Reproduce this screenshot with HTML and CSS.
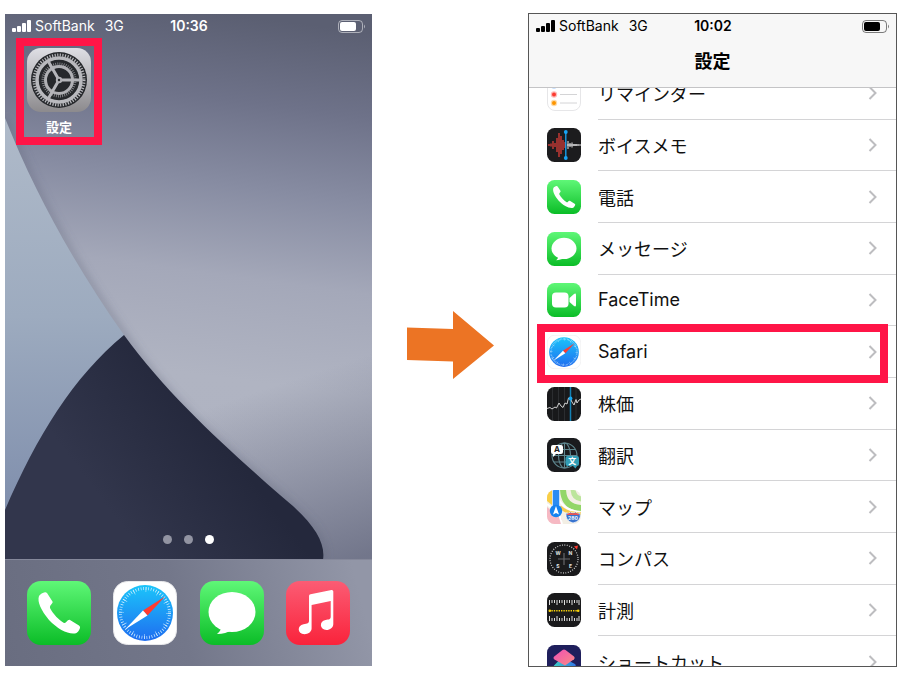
FILE: index.html
```html
<!DOCTYPE html>
<html lang="ja">
<head>
<meta charset="utf-8">
<meta name="viewport" content="width=device-width, initial-scale=1">
<title>設定 - Safari</title>
<link rel="stylesheet" href="styles.css">
</head>
<body>
<svg class="defs" aria-hidden="true">
  <defs>
    <linearGradient id="green" x1="0" y1="0" x2="0" y2="1"><stop offset="0" stop-color="#5ff777"/><stop offset="1" stop-color="#0bbd27"/></linearGradient>
    <linearGradient id="blue" x1="0" y1="0" x2="0" y2="1"><stop offset="0" stop-color="#1bc5fa"/><stop offset="1" stop-color="#1f6df0"/></linearGradient>
    <linearGradient id="red" x1="0" y1="0" x2="0" y2="1"><stop offset="0" stop-color="#fb5c74"/><stop offset="1" stop-color="#fa233b"/></linearGradient>
    <linearGradient id="metal" x1="0" y1="0" x2="0" y2="1"><stop offset="0" stop-color="#dfdfe5"/><stop offset="1" stop-color="#8c8a8d"/></linearGradient>
  </defs>
  <symbol id="phone" viewBox="0 0 64 64">
    <rect width="64" height="64" rx="14" fill="url(#green)"/>
    <path fill="#fff" d="M12 15C13 13 16 11.500 18 11.200Q19 11 20 12L25.500 20.500C26.500 22.500 22.500 23.500 23 27C26 33 32 39 37 42C39.500 42.500 40.500 38 43 39L52 44.500Q53.500 45.500 53 47C52 50 50.500 51.500 49 52.200C42 54 31 48.500 22 39C14 29 10 21 12 15Z"/>
  </symbol>
  <symbol id="messages" viewBox="0 0 64 64">
    <rect width="64" height="64" rx="14" fill="url(#green)"/>
    <ellipse cx="32" cy="31" rx="23.500" ry="20" fill="#fff"/>
    <path fill="#fff" d="M20 45C22.500 48 19 51.500 17 53C23 53 28 51.500 31 49Z"/>
  </symbol>
  <symbol id="safari" viewBox="0 0 64 64">
    <rect x=".5" y=".5" width="63" height="63" rx="14" fill="#fff" stroke="#e8e8ea"/>
    <circle cx="32" cy="32" r="28" fill="url(#blue)"/>
    <circle cx="32" cy="32" r="24.500" fill="none" stroke="#d7f0ff" stroke-width="3" stroke-dasharray=".7 1.866"/>
    <circle cx="32" cy="32" r="23.500" fill="none" stroke="#d7f0ff" stroke-width="5" stroke-dasharray=".7 11.604" stroke-opacity=".8"/>
    <path fill="#ff3b30" d="M52 15.500L30 29.500L34.500 34.500Z"/>
    <path fill="#fff" d="M12 48.500L30 29.500L34.500 34.500Z"/>
  </symbol>
</svg>

<main class="steps">
  <section class="home" aria-label="ホーム画面">
    <svg class="wallpaper" viewBox="0 0 367 652" preserveAspectRatio="none" aria-hidden="true">
      <defs>
        <linearGradient id="sky" gradientUnits="userSpaceOnUse" x1="225" y1="0" x2="150" y2="560">
          <stop offset="0" stop-color="#5b5f72"/><stop offset=".15" stop-color="#6e7289"/><stop offset=".3" stop-color="#878ca2"/><stop offset=".46" stop-color="#a4a8b9"/><stop offset=".64" stop-color="#b0b4c2"/><stop offset="1" stop-color="#aeb2c1"/>
        </linearGradient>
        <linearGradient id="corner" gradientUnits="userSpaceOnUse" x1="275" y1="370" x2="335" y2="550">
          <stop offset="0" stop-color="#6f7388" stop-opacity="0"/><stop offset="1" stop-color="#6f7388" stop-opacity=".95"/>
        </linearGradient>
        <linearGradient id="pale" x1="0" y1="0" x2="0" y2="1">
          <stop offset="0" stop-color="#afbac9"/><stop offset=".5" stop-color="#9dabbf"/><stop offset="1" stop-color="#7f8eac"/>
        </linearGradient>
        <linearGradient id="navy" gradientUnits="userSpaceOnUse" x1="85" y1="470" x2="190" y2="390">
          <stop offset="0" stop-color="#32364c"/><stop offset="1" stop-color="#24283c"/>
        </linearGradient>
        <linearGradient id="dock" gradientUnits="userSpaceOnUse" x1="0" y1="650" x2="350" y2="560">
          <stop offset="0" stop-color="#696d80"/><stop offset=".5" stop-color="#73778a"/><stop offset="1" stop-color="#9296a7"/>
        </linearGradient>
        <filter id="soft" x="-20%" y="-20%" width="140%" height="140%"><feGaussianBlur stdDeviation="4"/></filter>
      </defs>
      <rect width="367" height="652" fill="url(#sky)"/>
      <rect width="367" height="652" fill="url(#corner)"/>
      <path filter="url(#soft)" fill="none" stroke="#5d6178" stroke-opacity=".5" stroke-width="5" d="M0 104C30 180 72 255 119 321C165 390 220 434 272 479C310 512 320 527 318 546"/>
      <path fill="url(#pale)" d="M0 104C30 180 72 255 119 321L119 500L0 500Z"/>
      <path fill="url(#navy)" d="M0 496C32 422 68 363 119 321C165 384 222 434 275 481C307 507 321 527 318 546L318 548L0 548Z"/>
      <rect y="546" width="367" height="106" fill="url(#dock)"/>
    </svg>

    <header class="status status-light">
      <span class="carrier">
        <svg class="signal" viewBox="0 0 19 12" aria-hidden="true"><rect y="8" width="4" height="4" rx="1"/><rect x="5" y="6" width="4" height="6" rx="1"/><rect x="10" y="3" width="4" height="9" rx="1"/><rect x="15" width="4" height="12" rx="1"/></svg>
        <span>SoftBank</span><span class="network">3G</span>
      </span>
      <time class="time">10:36</time>
      <svg class="battery" viewBox="0 0 28 13" aria-hidden="true"><rect x=".5" y=".5" width="24" height="12" rx="3.500" fill="none" stroke="currentColor" stroke-opacity=".5"/><rect x="2" y="2" width="16" height="9" rx="2"/><path d="M26 4.500Q28 6.500 26 8.500Z" opacity=".5"/></svg>
    </header>

    <div class="apps">
      <button class="app" type="button">
        <svg class="app-icon" viewBox="0 0 64 64" aria-hidden="true">
          <rect width="64" height="64" rx="14" fill="url(#metal)"/>
          <circle cx="32" cy="32" r="28" fill="#26282c"/>
          <circle cx="32" cy="32" r="25" fill="none" stroke="#b9b9be" stroke-width="3" stroke-dasharray="1.200 1.418"/>
          <circle cx="32" cy="32" r="22" fill="none" stroke="#b9b9be" stroke-width="3.500"/>
          <circle cx="32" cy="32" r="16" fill="none" stroke="#8e8f94" stroke-width="3" stroke-dasharray=".8 1.295"/>
          <circle cx="32" cy="32" r="13.500" fill="none" stroke="#b0b0b5" stroke-width="3"/>
          <path d="M32 32H53M32 32L21.500 13.800M32 32L21.500 50.200" stroke="#b5b5ba" stroke-width="3"/>
          <circle cx="32" cy="32" r="3.200" fill="#b0b0b5"/><circle cx="32" cy="32" r="1.200" fill="#26282c"/>
        </svg>
        <span class="app-label">設定</span>
      </button>
    </div>

    <div class="pages" aria-hidden="true"><i class="dot"></i><i class="dot"></i><i class="dot dot-on"></i></div>

    <nav class="dock" aria-label="Dock">
      <button class="dock-app" type="button" aria-label="電話"><svg class="app-icon"><use href="#phone"/></svg></button>
      <button class="dock-app" type="button" aria-label="Safari"><svg class="app-icon"><use href="#safari"/></svg></button>
      <button class="dock-app" type="button" aria-label="メッセージ"><svg class="app-icon"><use href="#messages"/></svg></button>
      <button class="dock-app" type="button" aria-label="ミュージック">
        <svg class="app-icon" viewBox="0 0 64 64"><rect width="64" height="64" rx="14" fill="url(#red)"/><path fill="#fff" d="M23 15Q23 13.500 24.500 13.200L45.500 9Q47.300 8.800 47.300 10.500V43C47.300 46.500 44 49 40.500 49C33.500 49 33 40 39.500 39C43 38.400 44.700 38.500 44.700 35.500V20L25.600 24V47.500C25.600 51 22 53.200 18.500 53.200C11 53 11 44.500 17.500 43.300C21.500 42.700 23 42.500 23 39.500Z"/></svg>
      </button>
    </nav>
  </section>

  <svg class="arrow" viewBox="0 0 87 68" aria-hidden="true"><path fill="#ec7424" d="M0 16.500L46 18V0L87 34.500L46 68V50.500L0 49Z"/></svg>

  <section class="settings" aria-label="設定">
    <header class="settings-head">
      <div class="status">
        <span class="carrier">
          <svg class="signal" viewBox="0 0 19 12" aria-hidden="true"><rect y="8" width="4" height="4" rx="1"/><rect x="5" y="6" width="4" height="6" rx="1"/><rect x="10" y="3" width="4" height="9" rx="1"/><rect x="15" width="4" height="12" rx="1"/></svg>
          <span>SoftBank</span><span class="network">3G</span>
        </span>
        <time class="time">10:02</time>
        <svg class="battery" viewBox="0 0 28 13" aria-hidden="true"><rect x=".5" y=".5" width="24" height="12" rx="3.500" fill="none" stroke="currentColor" stroke-opacity=".5"/><rect x="2" y="2" width="16" height="9" rx="2"/><path d="M26 4.500Q28 6.500 26 8.500Z" opacity=".5"/></svg>
      </div>
      <h1 class="title">設定</h1>
    </header>
    <div class="viewport">
      <ul class="list">
        <li><a class="row" href="#">
          <svg class="row-icon" viewBox="0 0 34 34"><rect x=".5" y=".5" width="33" height="33" rx="7.500" fill="#fff" stroke="#e6e6e8"/><g stroke="#d4d4d6"><path d="M13 8.500H30M13 17.500H30M13 26H30"/></g><g fill-opacity=".35"><circle cx="7" cy="8.500" r="3.200" fill="#1a82fb"/><circle cx="7" cy="17.500" r="3.200" fill="#fc3b30"/><circle cx="7" cy="26" r="3.200" fill="#fd9500"/></g><circle cx="7" cy="8.500" r="2" fill="#1a82fb"/><circle cx="7" cy="17.500" r="2" fill="#fc3b30"/><circle cx="7" cy="26" r="2" fill="#fd9500"/></svg>
          <span class="row-body"><span>リマインダー</span><svg class="chevron" viewBox="0 0 9 14"><path d="M1.500 1L7.500 7L1.500 13"/></svg></span></a></li>
        <li><a class="row" href="#">
          <svg class="row-icon" viewBox="0 0 34 34"><rect width="34" height="34" rx="7.500" fill="#1c1c1e"/><path stroke="#dc3e38" stroke-width="1.300" d="M2 16V18M4 15.500V18.500M6 13V21M8 15V19M10 10V24M12 5V29M14 8V26M16 12V22M18 14V20"/><path stroke="#e9e9ea" d="M21 13V21M23 15V19M25 14.500V19.500M27 16V18M29 16V18M31 16.500V17.500M20 17H34"/><path stroke="#17a5f5" stroke-width="1.300" d="M18.800 4V30"/><circle cx="18.800" cy="4" r="1.900" fill="#17a5f5"/><circle cx="18.800" cy="30" r="1.900" fill="#17a5f5"/></svg>
          <span class="row-body"><span>ボイスメモ</span><svg class="chevron" viewBox="0 0 9 14"><path d="M1.500 1L7.500 7L1.500 13"/></svg></span></a></li>
        <li><a class="row" href="#">
          <svg class="row-icon"><use href="#phone"/></svg>
          <span class="row-body"><span>電話</span><svg class="chevron" viewBox="0 0 9 14"><path d="M1.500 1L7.500 7L1.500 13"/></svg></span></a></li>
        <li><a class="row" href="#">
          <svg class="row-icon"><use href="#messages"/></svg>
          <span class="row-body"><span>メッセージ</span><svg class="chevron" viewBox="0 0 9 14"><path d="M1.500 1L7.500 7L1.500 13"/></svg></span></a></li>
        <li><a class="row" href="#">
          <svg class="row-icon" viewBox="0 0 34 34"><rect width="34" height="34" rx="7.500" fill="url(#green)"/><rect x="5" y="9.500" width="16.500" height="15" rx="4" fill="#fff"/><path fill="#fff" d="M22.500 15L27 11Q29 9.800 29 12V22Q29 24.200 27 23L22.500 19Z"/></svg>
          <span class="row-body"><span>FaceTime</span><svg class="chevron" viewBox="0 0 9 14"><path d="M1.500 1L7.500 7L1.500 13"/></svg></span></a></li>
        <li><a class="row row-marked" href="#">
          <svg class="row-icon"><use href="#safari"/></svg>
          <span class="row-body"><span>Safari</span><svg class="chevron" viewBox="0 0 9 14"><path d="M1.500 1L7.500 7L1.500 13"/></svg></span></a></li>
        <li><a class="row" href="#">
          <svg class="row-icon" viewBox="0 0 34 34"><rect width="34" height="34" rx="7.500" fill="#18191b"/><path stroke="#34363a" stroke-width=".7" d="M5.500 1V33M11.500 0V34M17.500 0V34M29 1V33"/><path stroke="#1482b5" stroke-width="1.500" d="M23.500 0V34"/><path fill="none" stroke="#e3e3e3" stroke-width=".9" d="M0 21.500L3 20.500L5 22L8 20L9.500 21L12 16L14 19L16 20.500L18 16L20 17L21.500 11L23.500 12L25 15L27 18L29 12.500L30 16L32 13L34 12"/><circle cx="23.500" cy="11.500" r="1.900" fill="#18a7ef"/></svg>
          <span class="row-body"><span>株価</span><svg class="chevron" viewBox="0 0 9 14"><path d="M1.500 1L7.500 7L1.500 13"/></svg></span></a></li>
        <li><a class="row" href="#">
          <svg class="row-icon" viewBox="0 0 34 34"><rect width="34" height="34" rx="7.500" fill="#1a1b1e"/><g fill="none" stroke="#5e868e" stroke-width="1.100"><circle cx="17.500" cy="17.500" r="12.500"/><ellipse cx="17.500" cy="17.500" rx="6" ry="12.500"/><path d="M17.500 5V30M5 17.500H30M7 11.500H28M7 24H28"/></g><path fill="#fff" d="M6 7H14Q16 7 16 9V14Q16 16 14 16H9L6 19V16Q4 16 4 14V9Q4 7 6 7Z"/><path fill="#329db5" d="M20.500 18H30Q32 18 32 20V26Q32 28 30 28L28.500 30.500L26 28H20.500Q18.500 28 18.500 26V20Q18.500 18 20.500 18Z"/><text class="glyph" x="10" y="14.200" text-anchor="middle">A</text><text class="glyph glyph-cjk" x="25.300" y="25.500" text-anchor="middle">文</text></svg>
          <span class="row-body"><span>翻訳</span><svg class="chevron" viewBox="0 0 9 14"><path d="M1.500 1L7.500 7L1.500 13"/></svg></span></a></li>
        <li><a class="row" href="#">
          <svg class="row-icon" viewBox="0 0 34 34"><defs><clipPath id="tile"><rect width="34" height="34" rx="7.500"/></clipPath></defs><g clip-path="url(#tile)"><path fill="#f3efe5" d="M0 0H34V34H0Z"/><path fill="#f9ce46" d="M0 0H5V15L0 11Z"/><path fill="#f6b9c3" d="M0 17L15 29V34H0Z"/><g fill="none"><path stroke="#92d668" stroke-width="6" d="M16 -2C16 12 23 18 36 18"/><path stroke="#bce59c" stroke-width="5" d="M26 -2C26 5 29 9 36 9"/><path stroke="#fff" stroke-width="2" d="M12 10C17 18 23 21 36 23M0 14L12 24L15 34"/><path stroke="#f8ca4b" stroke-width="3" d="M13 17C20 23 26 23 36 24"/></g><path fill="#2b8cf2" d="M6 0H12V22H6Z"/><path stroke="#b4d8fb" stroke-width=".7" d="M5.500 0V17M12.500 0V17"/><circle cx="9" cy="21" r="6.200" fill="#1683f0"/><path fill="#fff" d="M9 16L12 24.500L9 23L6 24.500Z"/><path fill="#3974cf" stroke="#fff" stroke-width=".7" d="M19 23Q22 24 23.500 22Q26 24 28.500 22Q30 24 33 23Q35 31 26 33Q18 31 19 23Z"/><path fill="#e85454" d="M20 24L23.500 22.700Q26 24 28.500 22.700L32 24V25H20Z"/></g><text class="shield" x="26" y="29.500" text-anchor="middle">280</text></svg>
          <span class="row-body"><span>マップ</span><svg class="chevron" viewBox="0 0 9 14"><path d="M1.500 1L7.500 7L1.500 13"/></svg></span></a></li>
        <li><a class="row" href="#">
          <svg class="row-icon" viewBox="0 0 34 34"><rect width="34" height="34" rx="7.500" fill="#1a1a1c"/><circle cx="17" cy="17" r="14" fill="none" stroke="#d2d2d2" stroke-width="1.300" stroke-dasharray=".9 1.543"/><path stroke="#66676a" stroke-width="1.200" d="M17 11V23M11 17H23"/><path fill="#ff3b30" d="M27 4.500L31 3.500L30 7.500Z"/><g class="compass" text-anchor="middle"><text x="11" y="13">W</text><text x="23.500" y="13">N</text><text x="11" y="25.500">S</text><text x="23.500" y="25.500">E</text></g></svg>
          <span class="row-body"><span>コンパス</span><svg class="chevron" viewBox="0 0 9 14"><path d="M1.500 1L7.500 7L1.500 13"/></svg></span></a></li>
        <li><a class="row" href="#">
          <svg class="row-icon" viewBox="0 0 34 34"><rect width="34" height="34" rx="7.500" fill="#1a1a1c"/><path stroke="#dedede" d="M2.500 7V12M5 7V10M7.500 7V10M10 7V12M12.500 7V10M15 7V10M17.500 7V12M20 7V10M22.500 7V10M25 7V12M27.500 7V10M30 7V10M32 7V12M2.500 23V28M5 25V28M7.500 25V28M10 23V28M12.500 25V28M15 25V28M17.500 23V28M20 25V28M22.500 25V28M25 23V28M27.500 25V28M30 25V28M32 23V28"/><path stroke="#f8d30a" stroke-width="1.600" stroke-dasharray="1.400 1" d="M2 17.700H32"/><circle cx="2.800" cy="17.700" r="1.300" fill="#f8d30a"/><circle cx="31.200" cy="17.700" r="1.300" fill="#f8d30a"/></svg>
          <span class="row-body"><span>計測</span><svg class="chevron" viewBox="0 0 9 14"><path d="M1.500 1L7.500 7L1.500 13"/></svg></span></a></li>
        <li><a class="row" href="#">
          <svg class="row-icon" viewBox="0 0 34 34"><defs><linearGradient id="pink" x1="0" y1="0" x2="1" y2="1"><stop offset="0" stop-color="#f04fb5"/><stop offset="1" stop-color="#f98b83"/></linearGradient><linearGradient id="teal" x1="0" y1="0" x2="1" y2="0"><stop offset="0" stop-color="#3bd1c5"/><stop offset="1" stop-color="#3275e8"/></linearGradient></defs><rect width="34" height="34" rx="7.500" fill="#1f1f5c"/><path fill="url(#teal)" d="M15 12.500L28 19Q29.500 20.500 28 22L18 29Q16.500 30 15 29L7 23Q6 21.500 7.500 20Z"/><path fill="url(#pink)" d="M15.500 5Q17 4 18.500 5L27 11.500Q28.500 13 27 14.300L18 20.500L7.500 14.500Q5.500 13 7.500 11.300Z"/></svg>
          <span class="row-body"><span>ショートカット</span><svg class="chevron" viewBox="0 0 9 14"><path d="M1.500 1L7.500 7L1.500 13"/></svg></span></a></li>
      </ul>
    </div>
  </section>
</main>
</body>
</html>
```
FILE: styles.css
```css
* { box-sizing: border-box; }

body {
  margin: 0;
  background: #fff;
  color: #111;
  font-family: Inter, "Noto Sans CJK JP", sans-serif;
}

button {
  padding: 0;
  border: 0;
  background: none;
  color: inherit;
  font: inherit;
}

.defs { position: absolute; width: 0; height: 0; }

.steps {
  display: grid;
  grid-template-columns: 367fr 156px 369fr;
  padding: 13px 3px 18px 5px;
}

/* Status bar, shared by both screens */
.status {
  display: grid;
  grid-template-columns: 1fr auto 1fr;
  align-items: center;
  height: 24px;
  padding: 0 6px 0 7px;
  font-size: 14px;
  line-height: 24px;
}
.status svg { fill: currentColor; }
.status-light { color: #fff; }
.carrier { display: flex; align-items: center; gap: 4px; }
.network { margin-left: 6px; }
.signal { width: 19px; height: 12px; }
.time { font-weight: 600; }
.battery { justify-self: end; width: 28px; height: 13px; }

/* Home screen */
.home {
  position: relative;
  display: flex;
  flex-direction: column;
  margin: 1px 0;
  overflow: hidden;
}
.home > * { position: relative; }
.home > .wallpaper {
  position: absolute;
  inset: 0;
  width: 100%;
  height: 100%;
}
.apps { flex: 1; padding: 10px 22px; }
.app {
  position: relative;
  display: flex;
  flex-direction: column;
  align-items: center;
  gap: 5px;
}
.app::after {
  content: "";
  position: absolute;
  inset: -10px -11px -8px;
  border: 8px solid #ff1547;
}
.app-icon { display: block; width: 64px; height: 64px; }
.app-label {
  color: #fff;
  font-size: 13px;
  font-weight: 700;
  line-height: 20px;
}
.pages {
  display: flex;
  justify-content: center;
  gap: 12px;
  padding-bottom: 15px;
}
.dot {
  width: 9px;
  height: 9px;
  border-radius: 50%;
  background: #9294a2;
}
.dot-on { background: #fff; }
.dock {
  display: flex;
  justify-content: space-between;
  padding: 21px 22px;
  border-top: 1px solid #85889a;
}

.arrow {
  align-self: center;
  justify-self: center;
  width: 87px;
  height: 68px;
  margin-top: 9px;
}

/* Settings screen */
.settings { border: 1px solid #565656; }
.settings-head {
  height: 74px;
  border-bottom: 1px solid #c4c4c6;
  background: #f7f7f7;
  color: #000;
}
.title {
  margin: 0;
  padding-top: 11px;
  font-size: 18px;
  font-weight: 700;
  line-height: 26px;
  text-align: center;
}
.viewport { height: 578px; overflow: hidden; }
.list {
  display: grid;
  grid-auto-rows: 1fr;
  height: 620px;
  margin: -20px 0 0;
  padding: 0;
  list-style: none;
}
.row {
  position: relative;
  display: flex;
  align-items: center;
  gap: 17px;
  height: 100%;
  padding-left: 18px;
  color: #111;
  font-size: 18px;
  text-decoration: none;
}
.row-icon { flex: none; width: 34px; height: 34px; }
.row-body {
  display: flex;
  flex: 1;
  align-items: center;
  justify-content: space-between;
  height: 100%;
  padding-right: 19px;
  border-bottom: 1px solid #d4d4d6;
}
.chevron {
  width: 9px;
  height: 14px;
  fill: none;
  stroke: #bdbdc0;
  stroke-width: 2;
}
.row-marked::after {
  content: "";
  position: absolute;
  inset: -2px 8px -5px;
  border: 8px solid #ff1547;
  z-index: 1;
}

/* Lettering inside icons */
.glyph { fill: #222; font-size: 8px; font-weight: 700; }
.glyph-cjk { fill: #fff; }
.shield { fill: #fff; font-size: 5px; font-weight: 700; }
.compass { fill: #e5e5e5; font-size: 5px; font-weight: 700; }
```
